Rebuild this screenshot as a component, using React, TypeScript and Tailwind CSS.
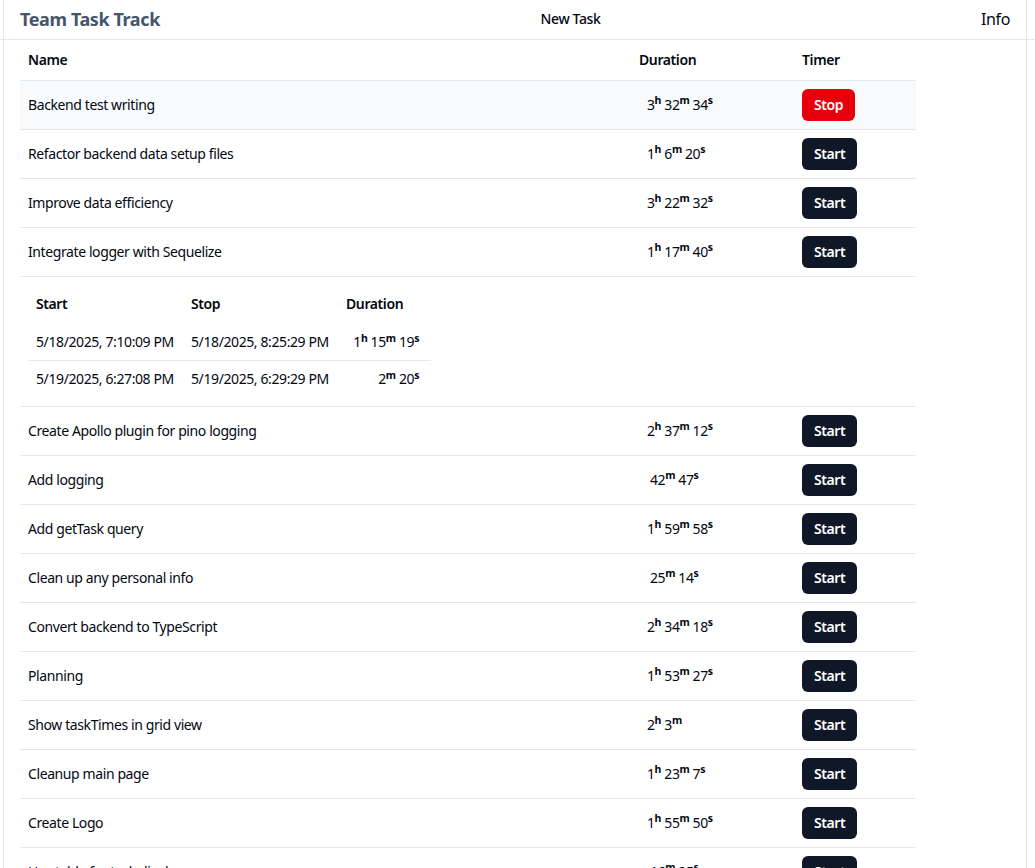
import React from 'react';

interface TaskTime {
  start: string;
  stop: string;
  seconds: number;
}

interface Task {
  id: number;
  name: string;
  seconds: number;
  running?: boolean;
  times?: TaskTime[];
}

const tasks: Task[] = [
  { id: 1, name: 'Backend test writing', seconds: 3 * 3600 + 32 * 60 + 34, running: true },
  { id: 2, name: 'Refactor backend data setup files', seconds: 3600 + 6 * 60 + 20 },
  { id: 3, name: 'Improve data efficiency', seconds: 3 * 3600 + 22 * 60 + 32 },
  {
    id: 4,
    name: 'Integrate logger with Sequelize',
    seconds: 3600 + 17 * 60 + 40,
    times: [
      { start: '5/18/2025, 7:10:09 PM', stop: '5/18/2025, 8:25:29 PM', seconds: 3600 + 15 * 60 + 19 },
      { start: '5/19/2025, 6:27:08 PM', stop: '5/19/2025, 6:29:29 PM', seconds: 2 * 60 + 20 },
    ],
  },
  { id: 5, name: 'Create Apollo plugin for pino logging', seconds: 2 * 3600 + 37 * 60 + 12 },
  { id: 6, name: 'Add logging', seconds: 42 * 60 + 47 },
  { id: 7, name: 'Add getTask query', seconds: 3600 + 59 * 60 + 58 },
  { id: 8, name: 'Clean up any personal info', seconds: 25 * 60 + 14 },
  { id: 9, name: 'Convert backend to TypeScript', seconds: 2 * 3600 + 34 * 60 + 18 },
  { id: 10, name: 'Planning', seconds: 3600 + 53 * 60 + 27 },
  { id: 11, name: 'Show taskTimes in grid view', seconds: 2 * 3600 + 3 * 60 },
  { id: 12, name: 'Cleanup main page', seconds: 3600 + 23 * 60 + 7 },
  { id: 13, name: 'Create Logo', seconds: 3600 + 55 * 60 + 50 },
  { id: 14, name: 'Use table for task display', seconds: 16 * 60 + 25 },
];

// Render a duration like 1h 15m 19s with superscript units
const Duration: React.FC<{ seconds: number }> = ({ seconds }) => {
  const h = Math.floor(seconds / 3600);
  const m = Math.floor((seconds % 3600) / 60);
  const s = seconds % 60;
  const parts: [number, string][] = [];
  if (h) parts.push([h, 'h']);
  if (m) parts.push([m, 'm']);
  if (s) parts.push([s, 's']);

  return (
    <span className={h ? '' : 'ml-[3px]'}>
      {parts.map(([value, unit], i) => (
        <React.Fragment key={unit}>
          {i > 0 && ' '}
          {value}
          <sup className="font-bold">{unit}</sup>
        </React.Fragment>
      ))}
    </span>
  );
};

const TimesTable: React.FC<{ times: TaskTime[] }> = ({ times }) => (
  <table className="table-fixed w-[403px]">
    <colgroup>
      <col className="w-[155px]" />
      <col className="w-[155px]" />
      <col className="w-[93px]" />
    </colgroup>
    <thead>
      <tr>
        <th className="px-2 h-[39px] text-left font-semibold">Start</th>
        <th className="px-2 h-[39px] text-left font-semibold">Stop</th>
        <th className="px-2 h-[39px] text-left font-semibold">Duration</th>
      </tr>
    </thead>
    <tbody>
      {times.map((t, i) => (
        <tr key={t.start} className={i < times.length - 1 ? 'border-b border-slate-200' : ''}>
          <td className="px-2 h-[37px] whitespace-nowrap">{t.start}</td>
          <td className="px-2 h-[37px] whitespace-nowrap">{t.stop}</td>
          <td className="pl-2 pr-3 h-[37px] text-right whitespace-nowrap">
            <Duration seconds={t.seconds} />
          </td>
        </tr>
      ))}
    </tbody>
  </table>
);

const App: React.FC = () => {
  return (
    <div
      className="min-h-screen bg-white text-sm text-gray-950 tracking-[-0.4px]"
      style={{ fontFamily: '"Noto Sans", "Open Sans", sans-serif' }}
    >
      <header className="border-b border-slate-200">
        <div className="w-[1024px] ml-[3px] border-x border-slate-200 h-[39px] px-4 flex items-center justify-between">
          <h1 className="text-lg font-bold text-slate-600 -mt-px">Team Task Track</h1>
          <button className="font-medium -mt-px">New Task</button>
          <a className="text-base -mt-px">Info</a>
        </div>
      </header>

      <main className="w-[1024px] ml-[3px] border-x border-slate-200 px-4 min-h-[829px]">
        <table className="table-fixed w-full max-w-4xl">
          <colgroup>
            <col className="w-[611px]" />
            <col className="w-[163px]" />
            <col className="w-[122px]" />
          </colgroup>
          <thead>
            <tr className="border-b border-slate-200">
              <th className="px-2 h-10 text-left font-semibold">Name</th>
              <th className="px-2 h-10 text-left font-semibold">Duration</th>
              <th className="px-2 h-10 text-left font-semibold">Timer</th>
            </tr>
          </thead>
          <tbody>
            {tasks.map((task) => (
              <React.Fragment key={task.id}>
                <tr className={`border-b border-slate-200 ${task.running ? 'bg-slate-50' : ''}`}>
                  <td className="px-2 py-2">{task.name}</td>
                  <td className="pl-4 pr-2 py-2 whitespace-nowrap">
                    <Duration seconds={task.seconds} />
                  </td>
                  <td className="px-2 py-2">
                    {task.running ? (
                      <button className="h-8 px-3 rounded-md bg-red-600 text-white font-semibold">
                        Stop
                      </button>
                    ) : (
                      <button className="h-8 px-3 rounded-md bg-gray-900 text-white font-semibold">
                        Start
                      </button>
                    )}
                  </td>
                </tr>
                {task.times && (
                  <tr className="border-b border-slate-200">
                    <td colSpan={3} className="px-2 py-2">
                      <TimesTable times={task.times} />
                    </td>
                  </tr>
                )}
              </React.Fragment>
            ))}
          </tbody>
        </table>
      </main>
    </div>
  );
};

export default App;
